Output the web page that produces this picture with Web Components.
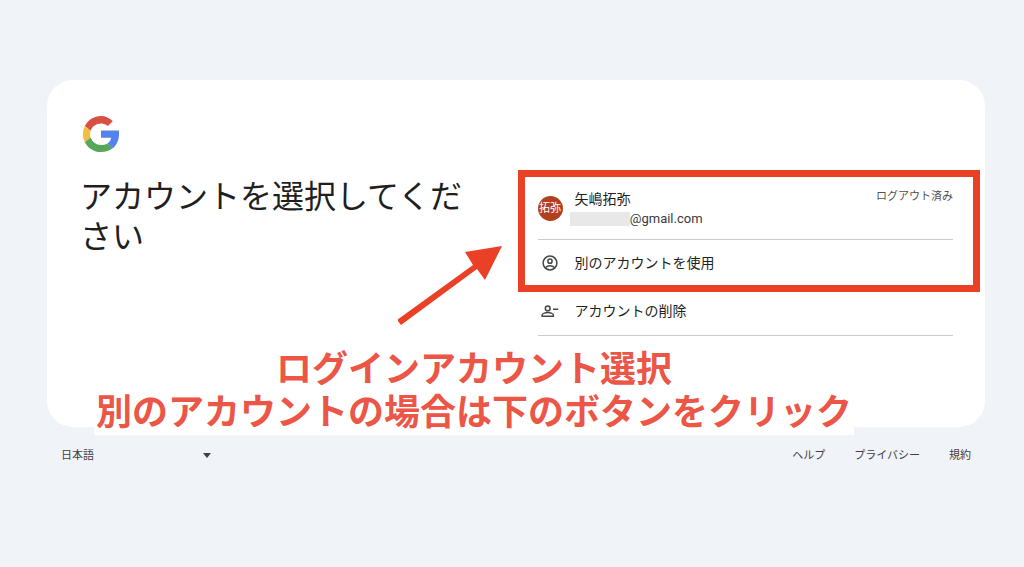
<!DOCTYPE html>
<html lang="ja">
<head>
<meta charset="utf-8">
<meta name="viewport" content="width=device-width, initial-scale=1">
<title>アカウントの選択</title>
<style>
body { margin: 0; background: #f0f3f8; color: #1f1f1f; font-family: Roboto, "Noto Sans CJK JP", sans-serif; }
</style>
</head>
<body>
<sign-in-page></sign-in-page>
<script>
const define = (name, html) => {
  const template = document.createElement('template');
  template.innerHTML = html;
  customElements.define(name, class extends HTMLElement {
    constructor() {
      super();
      this.attachShadow({ mode: 'open' }).append(template.content.cloneNode(true));
    }
  });
};

define('google-logo', `
<style>:host { display: block; width: 36px; height: 36px; } svg { display: block; width: 100%; height: 100%; }</style>
<svg viewBox="2.500 2 43 43.500" preserveAspectRatio="none" role="img" aria-label="Google">
  <path fill="#d95040" d="M24 11c3.500 0 6.200 1.300 8.200 3.100l5.900-5.900C34.100 4.500 29.600 2 24 2 15.500 2 8.200 7.100 4.700 14.200l6.900 5.600C13.400 14.700 18.200 11 24 11z"/>
  <path fill="#5383ec" d="M45.500 19.500H24v8.700h12.200c-.6 3.200-2.300 5.600-4.700 7.100l6.700 5.800c4.500-4.200 7.300-10.200 7.300-17.100 0-1.500 0-3.200 0-4.500z"/>
  <path fill="#f1bf42" d="M11.600 28.200a13 13 0 0 1 0-8.400l-6.900-5.600a22 22 0 0 0 0 19.500z"/>
  <path fill="#58a55c" d="M24 45.500c5.600 0 10.500-1.600 14.200-4.900l-6.700-5.500c-2 1.300-4.500 2-7.500 2-5.800 0-10.600-3.700-12.400-9l-6.900 5.500C8.200 40.600 15.500 45.500 24 45.500z"/>
</svg>`);

define('account-row', `
<style>
:host { display: block; border-bottom: 1px solid #cbcccd; }
button { display: flex; align-items: center; gap: 12px; width: 100%; height: 47px; padding: 0 0 2px; border: 0; background: none; color: inherit; font: inherit; font-size: 14px; line-height: 20px; text-align: left; cursor: pointer; }
.icon { display: flex; justify-content: center; width: 25px; }
:host([large]) button { height: 63px; padding: 2px 0 0; }
.text { flex: 1; }
.status { align-self: flex-start; padding-top: 9px; color: #505254; font-size: 11px; }
</style>
<button type="button"><span class="icon"><slot name="icon"></slot></span><span class="text"><slot></slot></span><span class="status"><slot name="status"></slot></span></button>`);

define('masked-email', `
<style>
:host { display: block; position: relative; padding-left: 51px; font-size: 13px; line-height: 20px; color: #3a3b3d; }
i { position: absolute; left: -5px; top: 3px; width: 60px; height: 14px; background: #e8e8e8; }
</style>
<slot></slot><i></i>`);

define('account-list', `
<style>
:host { display: block; position: relative; }
.avatar { width: 25px; height: 25px; border-radius: 50%; background: #b1401f; color: #fff; font-size: 11px; line-height: 25px; text-align: center; white-space: nowrap; }
.name { display: block; }
svg { display: block; width: 18px; height: 18px; fill: none; stroke: #444746; stroke-width: 2; }
.frame { position: absolute; inset: -6px -27px auto -20px; height: 108px; border: 7px solid #ea4025; pointer-events: none; }
</style>
<account-row large>
  <span class="avatar" slot="icon">拓弥</span>
  <span class="name">矢嶋拓弥</span><masked-email>t@gmail.com</masked-email>
  <span slot="status">ログアウト済み</span>
</account-row>
<account-row>
  <svg slot="icon" viewBox="0 0 24 24" aria-hidden="true"><circle cx="12" cy="12" r="9.200"/><circle cx="12" cy="9.500" r="2.800"/><path d="M5.800 18.500c1.500-1.900 3.700-2.900 6.200-2.900s4.700 1 6.200 2.900"/></svg>
  別のアカウントを使用
</account-row>
<account-row>
  <svg slot="icon" viewBox="0 0 24 24" aria-hidden="true"><circle cx="9" cy="8.500" r="3.200"/><path d="M1.500 19v-1.600c0-2.200 5-3.400 7.500-3.400s7.500 1.200 7.500 3.400V19zM16 9.500H23"/></svg>
  アカウントの削除
</account-row>
<div class="frame"></div>`);

define('note-caption', `
<style>
:host { display: block; color: #eb5647; font-size: 36px; font-weight: 700; line-height: 43px; text-align: center; white-space: nowrap; }
p { margin: 0 auto; width: fit-content; background: #fff; padding: 0 2px; }
</style>
<p><slot name="first"></slot></p><p><slot name="second"></slot></p>`);

define('note-arrow', `
<style>:host, svg { display: block; }</style>
<svg width="106" height="80" viewBox="0 0 106 80" aria-hidden="true"><path fill="#ea4025" d="M-1 74l76-55-8-13 37-6-17 34-8-11L3 79z"/></svg>`);

define('sign-in-card', `
<style>
:host { display: grid; grid-template-columns: minmax(0, 1fr) minmax(0, 1fr); column-gap: 42px; position: relative; box-sizing: border-box; min-height: 347px; padding: 36px 32px 36px 33px; border-radius: 26px; background: #fff; }
google-logo { margin-left: 3px; }
h1 { margin: 25px 24px 0 0; font-size: 32px; font-weight: 400; line-height: 40px; }
account-list { margin-top: 60px; }
note-arrow { position: absolute; left: 351px; top: 166px; }
note-caption { position: absolute; left: 47px; top: 269px; }
</style>
<section><google-logo></google-logo><h1>アカウントを選択してください</h1></section>
<account-list></account-list>
<note-arrow></note-arrow>
<note-caption><span slot="first">ログインアカウント選択</span><span slot="second">別のアカウントの場合は下のボタンをクリック</span></note-caption>`);

define('page-footer', `
<style>
:host { display: flex; justify-content: space-between; align-items: center; padding: 19px 14px; color: #3f4042; font-size: 11px; line-height: 20px; }
label { display: flex; align-items: center; position: relative; width: 151px; }
select { appearance: none; width: 100%; height: 20px; padding: 0; border: 0; background: none; color: inherit; font: inherit; }
svg { position: absolute; right: 1px; top: 7px; pointer-events: none; }
nav { display: flex; gap: 29px; }
a { color: inherit; text-decoration: none; }
</style>
<label><select aria-label="言語"><option>日本語</option></select><svg width="8" height="5" viewBox="0 0 8 5" aria-hidden="true"><path fill="#3f4042" d="M0 0h8L4 5z"/></svg></label>
<nav><a href="#help">ヘルプ</a><a href="#privacy">プライバシー</a><a href="#terms">規約</a></nav>`);

define('sign-in-page', `
<style>:host { display: block; padding: 80px 39px 0 47px; }</style>
<main><sign-in-card></sign-in-card></main>
<page-footer></page-footer>`);
</script>
</body>
</html>
